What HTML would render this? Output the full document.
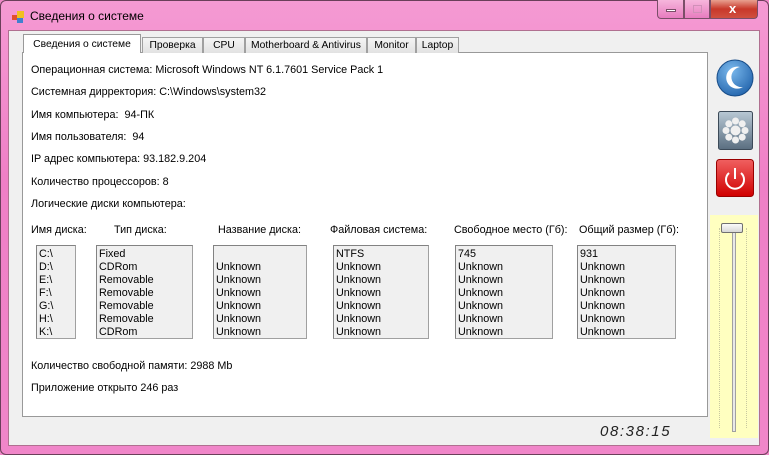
<!DOCTYPE html>
<html><head><meta charset="utf-8"><style>
*{margin:0;padding:0;box-sizing:border-box}
body{width:769px;height:455px;overflow:hidden;background:#f088c8;font-family:"Liberation Sans","DejaVu Sans",sans-serif;font-size:10.8px;color:#000;position:relative}
.frame{position:absolute;left:0;top:0;width:769px;height:455px;border:1px solid #6b3f5a;border-radius:6px;background:linear-gradient(#f59ad3,#ef7fc6 40%,#f086c9)}
.title{position:absolute;left:30px;top:9px;font-size:12px;color:#000}
.ico{position:absolute;left:12px;top:11px;width:12px;height:12px}
.client{position:absolute;left:8px;top:30px;width:752px;height:416px;background:#f0f0f0;border:1px solid #b07090}
.abs{position:absolute}
.tab{position:absolute;top:37px;height:16px;border:1px solid #a0a0a0;border-bottom:none;background:linear-gradient(#f4f4f4,#e2e2e2);font-size:10.3px;padding:2px 0 0 0;text-align:center;white-space:nowrap;overflow:hidden}
.page{position:absolute;left:22px;top:52px;width:686px;height:365px;background:#fff;border:1px solid #999}
.t{position:absolute;white-space:nowrap}
.lb{position:absolute;top:245px;height:94px;background:#f0f0f0;border:1px solid #a0a0a0;border-top-color:#828282;border-left-color:#828282;padding:2px 0 0 2px;line-height:13px;font-size:10.8px}
.wb{position:absolute;top:0;height:19px;border:1px solid #7a4e68;border-top:none}
</style></head><body>
<div class="frame"></div>
<svg class="ico" viewBox="0 0 12 12"><rect x="0" y="4" width="5" height="5" fill="#e05030"/><rect x="5" y="0" width="7" height="7" fill="#f0c020"/><rect x="5" y="7" width="6" height="5" fill="#4080d0"/></svg>
<div class="title">Сведения о системе</div>
<div class="wb" style="left:657px;width:27px;border-radius:0 0 0 4px;background:linear-gradient(#f6b6dc,#e77cbf)"><div class="abs" style="left:8px;top:9px;width:10px;height:3px;background:#fff;border:1px solid #7a4e68"></div></div>
<div class="wb" style="left:684px;width:26px;background:linear-gradient(#f6b6dc,#e77cbf)"><div class="abs" style="left:8px;top:5px;width:9px;height:8px;border:1px solid #d090b8"></div></div>
<div class="wb" style="left:710px;width:48px;border-radius:0 0 4px 0;background:linear-gradient(#e8a090,#c8382a 50%,#d05040)"><div class="abs" style="left:18px;top:1px;color:#fff;font-weight:bold;font-size:13px">x</div></div>
<div class="client"></div>
<div class="page"></div>
<div class="tab" style="left:23px;top:34px;height:19px;width:118px;background:#fff;border-color:#999;padding-top:4px">Сведения о системе</div>
<div class="tab" style="left:142px;width:61px">Проверка</div>
<div class="tab" style="left:203px;width:42px">CPU</div>
<div class="tab" style="left:245px;width:122px">Motherboard &amp; Antivirus</div>
<div class="tab" style="left:367px;width:49px">Monitor</div>
<div class="tab" style="left:416px;width:43px">Laptop</div>

<div class="t" style="left:31px;top:64px">Операционная система: Microsoft Windows NT 6.1.7601 Service Pack 1</div>
<div class="t" style="left:31px;top:86px">Системная дирректория: C:\Windows\system32</div>
<div class="t" style="left:31px;top:109px">Имя компьютера:&nbsp; 94-ПК</div>
<div class="t" style="left:31px;top:131px">Имя пользователя:&nbsp; 94</div>
<div class="t" style="left:31px;top:153px">IP адрес компьютера: 93.182.9.204</div>
<div class="t" style="left:31px;top:176px">Количество процессоров: 8</div>
<div class="t" style="left:31px;top:198px">Логические диски компьютера:</div>
<div class="t" style="left:31px;top:224px">Имя диска:</div>
<div class="t" style="left:114px;top:224px">Тип диска:</div>
<div class="t" style="left:218px;top:224px">Название диска:</div>
<div class="t" style="left:330px;top:224px">Файловая система:</div>
<div class="t" style="left:454px;top:224px">Свободное место (Гб):</div>
<div class="t" style="left:579px;top:224px">Общий размер (Гб):</div>

<div class="lb" style="left:36px;width:40px">C:\<br>D:\<br>E:\<br>F:\<br>G:\<br>H:\<br>K:\</div>
<div class="lb" style="left:96px;width:97px">Fixed<br>CDRom<br>Removable<br>Removable<br>Removable<br>Removable<br>CDRom</div>
<div class="lb" style="left:213px;width:94px">&nbsp;<br>Unknown<br>Unknown<br>Unknown<br>Unknown<br>Unknown<br>Unknown</div>
<div class="lb" style="left:333px;width:96px">NTFS<br>Unknown<br>Unknown<br>Unknown<br>Unknown<br>Unknown<br>Unknown</div>
<div class="lb" style="left:455px;width:98px">745<br>Unknown<br>Unknown<br>Unknown<br>Unknown<br>Unknown<br>Unknown</div>
<div class="lb" style="left:577px;width:99px">931<br>Unknown<br>Unknown<br>Unknown<br>Unknown<br>Unknown<br>Unknown</div>

<div class="t" style="left:31px;top:360px">Количество свободной памяти: 2988 Mb</div>
<div class="t" style="left:31px;top:382px">Приложение открыто 246 раз</div>
<div class="t" style="left:600px;top:423px;font-size:15px;font-style:italic;color:#222;letter-spacing:1.6px">08:38:15</div>

<svg class="abs" style="left:716px;top:59px" width="38" height="38" viewBox="0 0 38 38"><defs><radialGradient id="g1" cx=".4" cy=".3" r=".8"><stop offset="0" stop-color="#7ab8ec"/><stop offset="1" stop-color="#1d5fa8"/></radialGradient></defs><circle cx="19" cy="19" r="18" fill="url(#g1)" stroke="#174c88"/><path d="M24 8 A11 11 0 1 0 27 28 A9 9 0 1 1 24 8Z" fill="#fff"/></svg>
<svg class="abs" style="left:718px;top:111px" width="35" height="39" viewBox="0 0 35 39"><defs><linearGradient id="g2" x1="0" y1="0" x2="0" y2="1"><stop offset="0" stop-color="#b8c8d4"/><stop offset="1" stop-color="#5a6e80"/></linearGradient></defs><rect x=".5" y=".5" width="34" height="38" rx="2" fill="url(#g2)" stroke="#3c4a58"/><g fill="#f0f0f0"><circle cx="17.5" cy="19.5" r="5"/><circle cx="17.5" cy="10" r="3.5"/><circle cx="17.5" cy="29" r="3.5"/><circle cx="8" cy="19.5" r="3.5"/><circle cx="27" cy="19.5" r="3.5"/><circle cx="10.8" cy="12.8" r="3.5"/><circle cx="24.2" cy="12.8" r="3.5"/><circle cx="10.8" cy="26.2" r="3.5"/><circle cx="24.2" cy="26.2" r="3.5"/></g></svg>
<svg class="abs" style="left:716px;top:159px" width="38" height="38" viewBox="0 0 38 38"><defs><linearGradient id="g3" x1="0" y1="0" x2="0" y2="1"><stop offset="0" stop-color="#f06060"/><stop offset="1" stop-color="#d00000"/></linearGradient></defs><rect x=".5" y=".5" width="37" height="37" rx="3" fill="url(#g3)" stroke="#900"/><path d="M13 14 A9 9 0 1 0 25 14" fill="none" stroke="#fff" stroke-width="2"/><line x1="19" y1="9" x2="19" y2="20" stroke="#fff" stroke-width="2"/></svg>

<div class="abs" style="left:710px;top:215px;width:48px;height:223px;background:#ffffc0"></div>
<div class="abs" style="left:719px;top:228px;width:3px;height:200px;border-left:1px dotted #c8c8a0"></div>
<div class="abs" style="left:746px;top:228px;width:3px;height:200px;border-left:1px dotted #c8c8a0"></div>
<div class="abs" style="left:732px;top:228px;width:4px;height:204px;background:#e8e8e8;border:1px solid #a0a0a0"></div>
<div class="abs" style="left:721px;top:223px;width:22px;height:10px;border:1px solid #707070;border-radius:2px;background:linear-gradient(#fafafa,#d8d8d8)"></div>
</body></html>
